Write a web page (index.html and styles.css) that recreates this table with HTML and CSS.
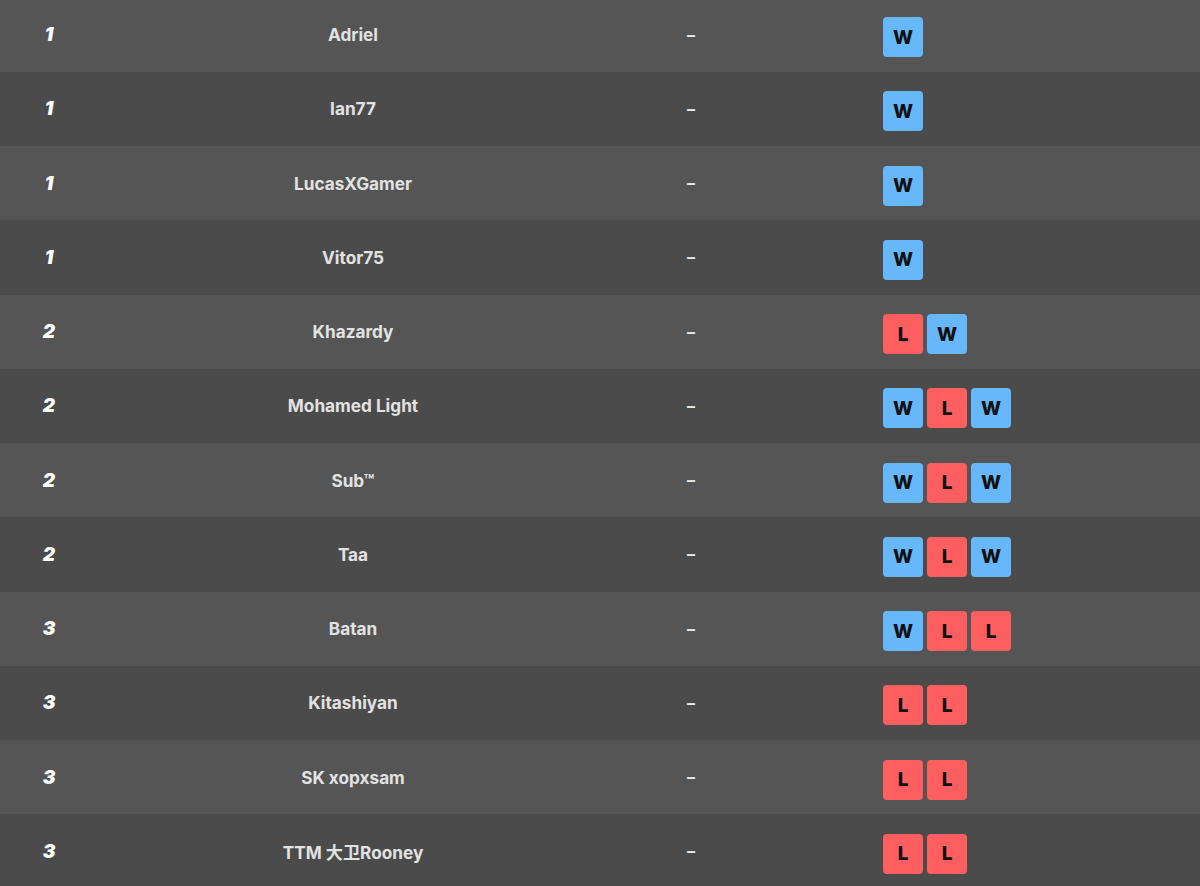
FILE: index.html
```html
<!DOCTYPE html>
<html>
<head>
<meta charset="utf-8">
<link rel="stylesheet" href="styles.css">
</head>
<body>
<div class="table">
  <div class="row"><div class="rank">1</div><div class="name">Adriel</div><div class="dash">–</div><div class="badges"><span class="b w">W</span></div></div>
  <div class="row"><div class="rank">1</div><div class="name">Ian77</div><div class="dash">–</div><div class="badges"><span class="b w">W</span></div></div>
  <div class="row"><div class="rank">1</div><div class="name">LucasXGamer</div><div class="dash">–</div><div class="badges"><span class="b w">W</span></div></div>
  <div class="row"><div class="rank">1</div><div class="name">Vitor75</div><div class="dash">–</div><div class="badges"><span class="b w">W</span></div></div>
  <div class="row"><div class="rank">2</div><div class="name">Khazardy</div><div class="dash">–</div><div class="badges"><span class="b l">L</span><span class="b w">W</span></div></div>
  <div class="row"><div class="rank">2</div><div class="name">Mohamed Light</div><div class="dash">–</div><div class="badges"><span class="b w">W</span><span class="b l">L</span><span class="b w">W</span></div></div>
  <div class="row"><div class="rank">2</div><div class="name">Sub™</div><div class="dash">–</div><div class="badges"><span class="b w">W</span><span class="b l">L</span><span class="b w">W</span></div></div>
  <div class="row"><div class="rank">2</div><div class="name">Taa</div><div class="dash">–</div><div class="badges"><span class="b w">W</span><span class="b l">L</span><span class="b w">W</span></div></div>
  <div class="row"><div class="rank">3</div><div class="name">Batan</div><div class="dash">–</div><div class="badges"><span class="b w">W</span><span class="b l">L</span><span class="b l">L</span></div></div>
  <div class="row"><div class="rank">3</div><div class="name">Kitashiyan</div><div class="dash">–</div><div class="badges"><span class="b l">L</span><span class="b l">L</span></div></div>
  <div class="row"><div class="rank">3</div><div class="name">SK xopxsam</div><div class="dash">–</div><div class="badges"><span class="b l">L</span><span class="b l">L</span></div></div>
  <div class="row"><div class="rank">3</div><div class="name">TTM 大卫Rooney</div><div class="dash">–</div><div class="badges"><span class="b l">L</span><span class="b l">L</span></div></div>
</div>
</body>
</html>
```
FILE: styles.css
```css
html, body {
  margin: 0;
  padding: 0;
  background: #4b4b4b;
  overflow: hidden;
}
body {
  font-family: Inter, "Noto Sans CJK SC", sans-serif;
}
.table {
  margin-top: -2.5px;
  display: flex;
  flex-direction: column;
}
.row {
  height: 74.25px;
  display: grid;
  grid-template-columns: 98px 510px 164px 1fr;
  align-items: center;
  background: #555555;
}
.row:nth-child(even) {
  background: #4b4b4b;
}
.rank {
  text-align: center;
  color: #ffffff;
  font-size: 19px;
  font-weight: 900;
  font-style: italic;
}
.name {
  text-align: center;
  color: #e2e2e2;
  font-size: 17.2px;
  font-weight: 700;
}
.dash {
  text-align: center;
  color: #e8e8e8;
  font-size: 16px;
  font-weight: 700;
  padding-left: 2px;
}
.badges {
  display: flex;
  gap: 4px;
  padding-left: 111px;
  margin-top: 5px;
}
.b {
  width: 40px;
  height: 40px;
  border-radius: 4px;
  display: flex;
  align-items: center;
  justify-content: center;
  color: #111;
  font-size: 19px;
  font-weight: 800;
}
.b.w { background: #66b8fb; }
.b.l { background: #fd5f60; }
```
